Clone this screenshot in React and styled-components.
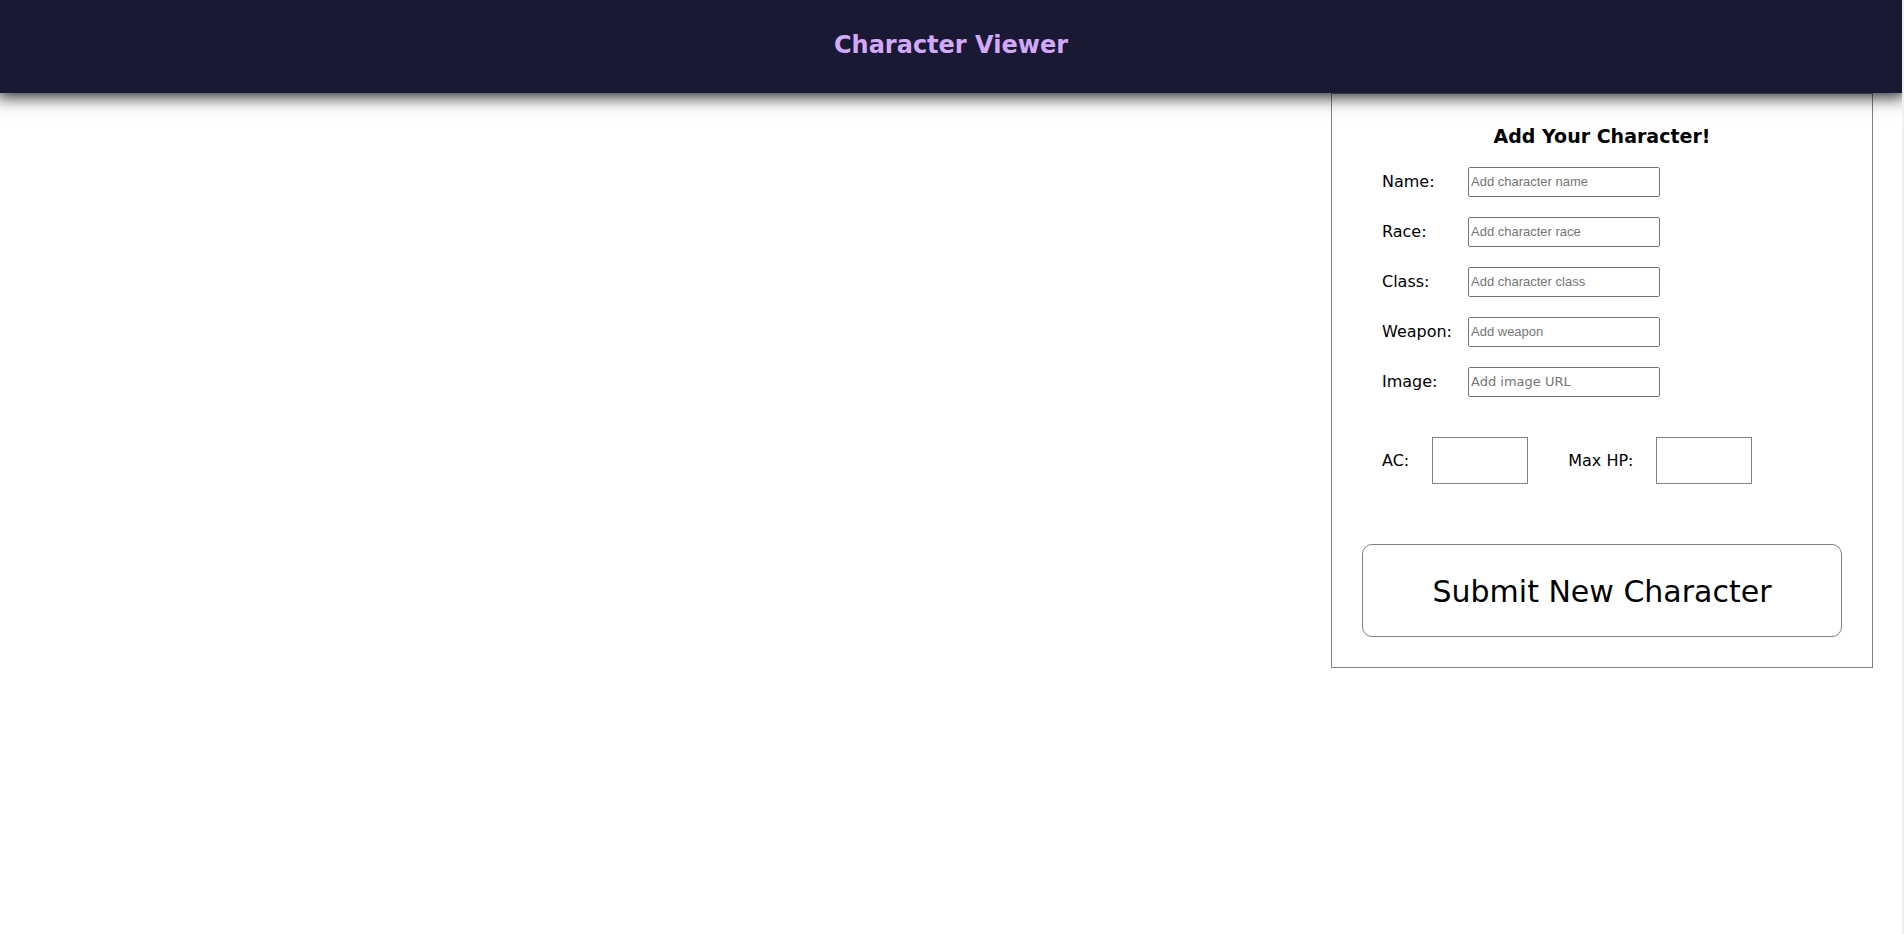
import React from 'react';
import styled, { createGlobalStyle } from 'styled-components';

const GlobalStyle = createGlobalStyle`
  *, *::before, *::after { box-sizing: border-box; }
  body {
    margin: 0;
    background: #fff;
    color: #000;
    font: 16px/20px Verdana, "DejaVu Sans", sans-serif;
  }
`;

const Page = styled.div`
  min-height: 100vh;
  border-right: 2px solid #f0f0f0;
`;

const Header = styled.header`
  position: relative;
  padding: 29px 30px 32px;
  background: #1a1933;
  color: #d2a8f8;
  text-align: center;
  box-shadow: 0 0 16px 4px rgba(0, 0, 0, 0.85);
  clip-path: inset(0 0 -30px 0);
`;

const Title = styled.h1`
  margin: 0;
  font-size: 24px;
  line-height: 32px;
`;

const Main = styled.main`
  display: flex;
  justify-content: flex-end;
  padding: 0 29px;
`;

const Panel = styled.form`
  width: 542px;
  max-width: 100%;
  padding: 30px;
  border: 1px solid #808080;
`;

const PanelTitle = styled.h2`
  margin: 0 0 19px;
  font-size: 19px;
  line-height: 24px;
  text-align: center;
`;

const Fields = styled.div`
  display: grid;
  gap: 20px;
  padding: 0 20px;
`;

const Field = styled.div`
  display: flex;
  align-items: center;
`;

const FieldLabel = styled.label`
  width: 86px;
`;

const TextInput = styled.input`
  width: 192px;
  height: 30px;
  padding: 0 2px 1px;
  border: 1px solid #767676;
  border-radius: 2px;
  font: 13px ${(p) => (p.type === 'url' ? 'Verdana, "DejaVu Sans", sans-serif' : 'Arial, "Liberation Sans", sans-serif')};
  &::placeholder { color: #757575; opacity: 1; }
`;

const Stats = styled.div`
  display: flex;
  gap: 40px;
  padding: 0 20px;
  margin: 40px 0 60px;
`;

const Stat = styled.div`
  display: flex;
  align-items: center;
  gap: 23px;
`;

const StatInput = styled.input`
  width: 96px;
  height: 47px;
  padding: 0 10px;
  border: 1px solid #808080;
  font: inherit;
`;

const Submit = styled.button`
  display: block;
  width: 100%;
  padding: 27px 20px 25px;
  border: 1px solid #808080;
  border-radius: 10px;
  background: #fff;
  color: #000;
  font: 30px/39px Verdana, "DejaVu Sans", sans-serif;
`;

const fields = [
  { id: 'name', label: 'Name:', hint: 'Add character name' },
  { id: 'race', label: 'Race:', hint: 'Add character race' },
  { id: 'class', label: 'Class:', hint: 'Add character class' },
  { id: 'weapon', label: 'Weapon:', hint: 'Add weapon' },
  { id: 'image', label: 'Image:', hint: 'Add image URL', type: 'url' },
];

const stats = [
  { id: 'ac', label: 'AC:' },
  { id: 'hp', label: 'Max HP:' },
];

export default function App() {
  return (
    <Page>
      <GlobalStyle />
      <Header><Title>Character Viewer</Title></Header>
      <Main>
        <Panel onSubmit={(e) => e.preventDefault()}>
          <PanelTitle>Add Your Character!</PanelTitle>
          <Fields>
            {fields.map((f) => (
              <Field key={f.id}>
                <FieldLabel htmlFor={f.id}>{f.label}</FieldLabel>
                <TextInput id={f.id} type={f.type || 'text'} placeholder={f.hint} />
              </Field>
            ))}
          </Fields>
          <Stats>
            {stats.map((s) => (
              <Stat key={s.id}>
                <label htmlFor={s.id}>{s.label}</label>
                <StatInput id={s.id} type="text" inputMode="numeric" />
              </Stat>
            ))}
          </Stats>
          <Submit type="submit">Submit New Character</Submit>
        </Panel>
      </Main>
    </Page>
  );
}
